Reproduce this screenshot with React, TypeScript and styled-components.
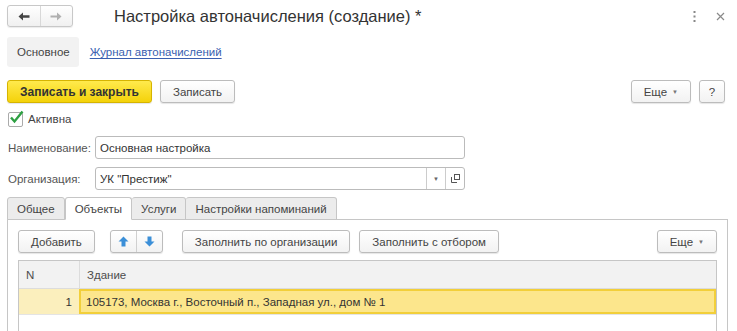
import styled, { createGlobalStyle } from 'styled-components'

const GlobalStyle = createGlobalStyle`
  body {
    margin: 0;
    background: #fff;
    font-family: "Liberation Sans", Arial, sans-serif;
    font-size: 11.5px;
    color: #4d4d4d;
  }
`

const Page = styled.div`
  width: 737px;
  height: 331px;
  overflow: hidden;
  display: flex;
  flex-direction: column;
`

const Header = styled.div`
  display: flex;
  align-items: center;
  height: 22px;
  padding: 5px 12px 0 7px;
`

const NavGroup = styled.div`
  display: flex;
  width: 64px;
  height: 20px;
  border: 1px solid #c8c8c8;
  border-radius: 3px;
  background: linear-gradient(#fff, #f0f0f0);
  box-shadow: 0 1px 1px rgba(0, 0, 0, 0.08);
`

const NavBtn = styled.div<{ $sep?: boolean }>`
  flex: 1;
  display: flex;
  align-items: center;
  justify-content: center;
  border-left: ${(p) => (p.$sep ? '1px solid #d8d8d8' : 'none')};
`

const Title = styled.div`
  margin-left: 41px;
  font-size: 16.5px;
  color: #333;
  flex: 1;
`

const HeadIcon = styled.div`
  display: flex;
  align-items: center;
  margin-left: 20px;
`

const SectionBar = styled.div`
  display: flex;
  align-items: center;
  margin-top: 10px;
  padding-left: 7px;
  height: 30px;
`

const SectionActive = styled.div`
  background: #f2f2f2;
  border-radius: 3px;
  height: 30px;
  padding: 0 9px 0 10px;
  display: flex;
  align-items: center;
  color: #444;
`

const Link = styled.a`
  margin-left: 11px;
  color: #3a5fb0;
  text-decoration: underline;
  text-underline-offset: 2px;
`

const CommandBar = styled.div`
  display: flex;
  align-items: center;
  margin-top: 13px;
  padding: 0 12px 0 7px;
  gap: 8px;
`

const Button = styled.div<{ $primary?: boolean; $w?: number }>`
  height: 21px;
  padding: 0 12px;
  ${(p) => (p.$w ? `width: ${p.$w}px; padding: 0; justify-content: center;` : '')}
  display: flex;
  align-items: center;
  border: 1px solid ${(p) => (p.$primary ? '#d6b400' : '#bcbcbc')};
  border-radius: 3px;
  background: ${(p) => (p.$primary ? 'linear-gradient(#ffea4d, #f4d20a)' : 'linear-gradient(#fff, #f2f2f2)')};
  box-shadow: 0 1px 1px rgba(0, 0, 0, 0.1);
  color: ${(p) => (p.$primary ? '#333' : '#444')};
  font-size: ${(p) => (p.$primary ? 12 : 11.5)}px;
  font-weight: ${(p) => (p.$primary ? 'bold' : 'normal')};
  white-space: nowrap;
`

const Caret = styled.span`
  margin-left: 5px;
  font-size: 6px;
  color: #777;
`

const Spacer = styled.div`
  flex: 1;
`

const CheckRow = styled.div`
  display: flex;
  align-items: center;
  margin-top: 8px;
  padding-left: 8px;
  height: 16px;
`

const CheckBox = styled.div`
  width: 13px;
  height: 13px;
  border: 1px solid #aaa;
  border-radius: 2px;
  background: #fff;
  position: relative;
  svg {
    position: absolute;
    left: 0;
    top: -3px;
  }
`

const CheckLabel = styled.span`
  margin-left: 5px;
  color: #444;
`

const FieldRow = styled.div<{ $top: number }>`
  display: flex;
  align-items: center;
  margin-top: ${(p) => p.$top}px;
  padding-left: 8px;
`

const Label = styled.div`
  width: 87px;
  color: #555;
`

const Input = styled.div`
  width: 368px;
  height: 21px;
  border: 1px solid #bbb;
  border-radius: 3px;
  display: flex;
  align-items: center;
  background: #fff;
`

const InputText = styled.div`
  flex: 1;
  padding-left: 4px;
  color: #333;
`

const InputBtn = styled.div`
  width: 18px;
  height: 100%;
  border-left: 1px solid #ccc;
  display: flex;
  align-items: center;
  justify-content: center;
  color: #666;
  font-size: 6px;
`

const Tabs = styled.div`
  display: flex;
  margin-top: 7px;
  padding-left: 7px;
  height: 23px;
  position: relative;
  z-index: 1;
`

const Tab = styled.div<{ $active?: boolean }>`
  padding: 0 9px;
  display: flex;
  align-items: center;
  color: #444;
  border: 1px solid #c6c6c6;
  border-left-width: ${(p) => (p.$active ? '1px' : '0')};
  border-bottom: ${(p) => (p.$active ? '1px solid #fff' : '1px solid #c6c6c6')};
  border-radius: 3px 3px 0 0;
  background: ${(p) => (p.$active ? '#fff' : '#ececec')};
  &:first-child {
    border-left-width: 1px;
  }
`

const Panel = styled.div`
  margin: -1px 9px 0 7px;
  border: 1px solid #c6c6c6;
  border-bottom: none;
  flex: 1;
  padding: 10px 10px 0 10px;
  display: flex;
  flex-direction: column;
`

const PanelBar = styled.div`
  display: flex;
  align-items: center;
  gap: 9px;
`

const ArrowGroup = styled.div`
  display: flex;
  height: 21px;
  margin: 0 10px 0 6px;
  border: 1px solid #bcbcbc;
  border-radius: 3px;
  background: linear-gradient(#fff, #f2f2f2);
  box-shadow: 0 1px 1px rgba(0, 0, 0, 0.1);
`

const ArrowBtn = styled.div<{ $sep?: boolean }>`
  width: 25px;
  display: flex;
  align-items: center;
  justify-content: center;
  border-left: ${(p) => (p.$sep ? '1px solid #d0d0d0' : 'none')};
`

const Table = styled.div`
  margin-top: 7px;
  border: 1px solid #c6c6c6;
  border-bottom: none;
  flex: 1;
`

const HeadRow = styled.div`
  display: flex;
  height: 27px;
  background: #f2f2f2;
  border-bottom: 1px solid #dcdcdc;
`

const Cell = styled.div<{ $w?: number; $right?: boolean; $sep?: boolean }>`
  ${(p) => (p.$w ? `width: ${p.$w}px;` : 'flex: 1;')}
  display: flex;
  align-items: center;
  justify-content: ${(p) => (p.$right ? 'flex-end' : 'flex-start')};
  padding: 0 7px;
  box-sizing: border-box;
  border-left: ${(p) => (p.$sep ? '1px solid #dcdcdc' : 'none')};
`

const DataRow = styled.div`
  display: flex;
  height: 25px;
  background: #fbefbd;
  border-bottom: 1px solid #e4e4e4;
  color: #333;
`

const SelectedCell = styled(Cell)`
  background: #fce68c;
  border: 2px solid #f2cf3a;
  padding-left: 5px;
`

const ArrowIcon = ({ down }: { down?: boolean }) => (
  <svg width="11" height="11" viewBox="0 0 11 11" style={{ transform: down ? 'rotate(180deg)' : undefined }}>
    <path d="M5.5 0.5 L10.5 5.5 H7.5 V10.5 H3.5 V5.5 H0.5 Z" fill="#3b8fd8" />
  </svg>
)

export default function App() {
  return (
    <Page>
      <GlobalStyle />
      <Header>
        <NavGroup>
          <NavBtn>
            <svg width="12" height="9" viewBox="0 0 12 9">
              <path d="M0.5 4.5 L5 0.5 V3.3 H11.5 V5.7 H5 V8.5 Z" fill="#444" />
            </svg>
          </NavBtn>
          <NavBtn $sep>
            <svg width="12" height="9" viewBox="0 0 12 9">
              <path d="M11.5 4.5 L7 0.5 V3.5 H0.5 V5.5 H7 V8.5 Z" fill="#b0b0b0" />
            </svg>
          </NavBtn>
        </NavGroup>
        <Title>Настройка автоначисления (создание) *</Title>
        <HeadIcon>
          <svg width="3" height="11" viewBox="0 0 3 11">
            <rect x="0.5" y="0" width="2" height="2" fill="#888" />
            <rect x="0.5" y="4.5" width="2" height="2" fill="#888" />
            <rect x="0.5" y="9" width="2" height="2" fill="#888" />
          </svg>
        </HeadIcon>
        <HeadIcon>
          <svg width="9" height="9" viewBox="0 0 9 9">
            <path d="M1 1 L8 8 M8 1 L1 8" stroke="#8a8a8a" strokeWidth="1.2" />
          </svg>
        </HeadIcon>
      </Header>

      <SectionBar>
        <SectionActive>Основное</SectionActive>
        <Link>Журнал автоначислений</Link>
      </SectionBar>

      <CommandBar>
        <Button $primary>Записать и закрыть</Button>
        <Button>Записать</Button>
        <Spacer />
        <Button>
          Еще<Caret>▼</Caret>
        </Button>
        <Button $w={24}>?</Button>
      </CommandBar>

      <CheckRow>
        <CheckBox>
          <svg width="15" height="14" viewBox="0 0 15 14">
            <path d="M2 7.5 L5.5 11.5 L13.5 1.5" stroke="#2ea043" strokeWidth="2.4" fill="none" />
          </svg>
        </CheckBox>
        <CheckLabel>Активна</CheckLabel>
      </CheckRow>

      <FieldRow $top={9}>
        <Label>Наименование:</Label>
        <Input>
          <InputText>Основная настройка</InputText>
        </Input>
      </FieldRow>

      <FieldRow $top={8}>
        <Label>Организация:</Label>
        <Input>
          <InputText>УК "Престиж"</InputText>
          <InputBtn>▼</InputBtn>
          <InputBtn>
            <svg width="9" height="9" viewBox="0 0 9 9">
              <rect x="3.5" y="0.5" width="5" height="5" fill="none" stroke="#555" />
              <path d="M0.5 3 V8.5 H6" fill="none" stroke="#555" />
            </svg>
          </InputBtn>
        </Input>
      </FieldRow>

      <Tabs>
        <Tab>Общее</Tab>
        <Tab $active>Объекты</Tab>
        <Tab>Услуги</Tab>
        <Tab>Настройки напоминаний</Tab>
      </Tabs>

      <Panel>
        <PanelBar>
          <Button>Добавить</Button>
          <ArrowGroup>
            <ArrowBtn>
              <ArrowIcon />
            </ArrowBtn>
            <ArrowBtn $sep>
              <ArrowIcon down />
            </ArrowBtn>
          </ArrowGroup>
          <Button>Заполнить по организации</Button>
          <Button>Заполнить с отбором</Button>
          <Spacer />
          <Button>
            Еще<Caret>▼</Caret>
          </Button>
        </PanelBar>
        <Table>
          <HeadRow>
            <Cell $w={60}>N</Cell>
            <Cell $sep>Здание</Cell>
          </HeadRow>
          <DataRow>
            <Cell $w={60} $right>
              1
            </Cell>
            <SelectedCell>105173, Москва г., Восточный п., Западная ул., дом № 1</SelectedCell>
          </DataRow>
        </Table>
      </Panel>
    </Page>
  )
}
